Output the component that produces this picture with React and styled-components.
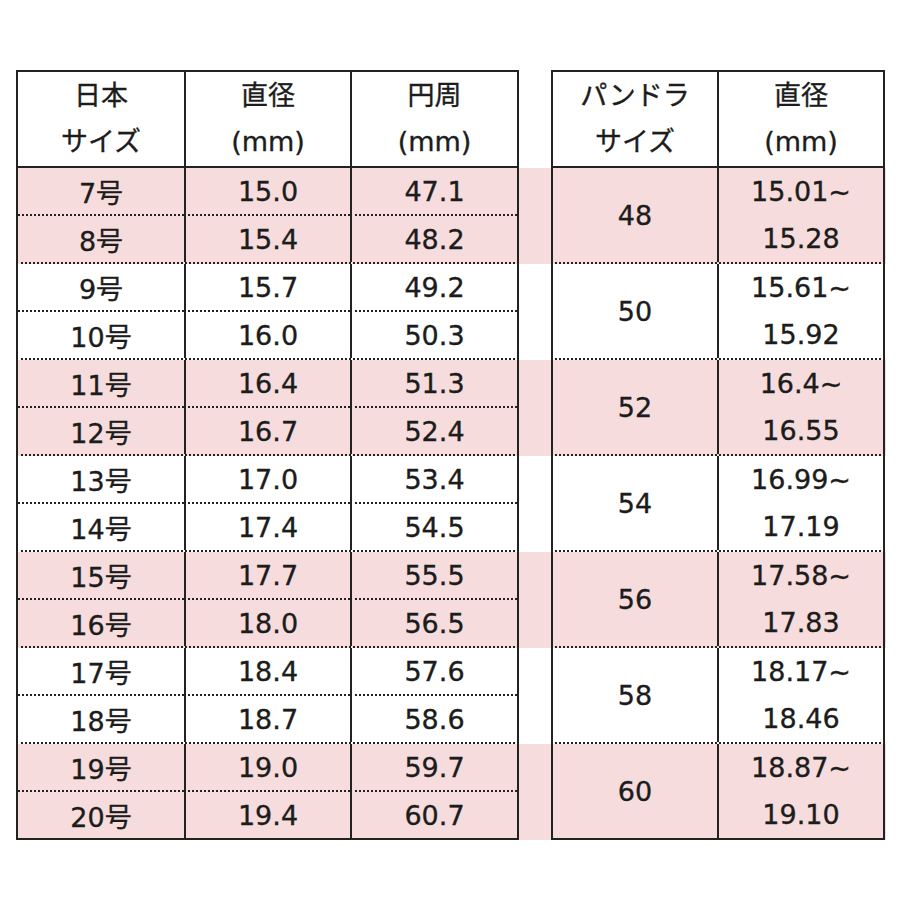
import React from "react";
import styled, { createGlobalStyle } from "styled-components";

const GlobalStyle = createGlobalStyle`
  body {
    margin: 0;
    background: #fff;
    font-family: "DejaVu Sans", "Noto Sans CJK JP", sans-serif;
    color: #1c1c1c;
  }
`;

const PINK = "#f6dcdc";
const LINE = "#222";

const Sheet = styled.div`
  margin: 70px 0 0 16px;
  width: 870px;
  display: flex;
  flex-direction: column;
`;

const Band = styled.div`
  display: flex;
  background: ${(p) => (p.$pink ? PINK : "transparent")};
`;

const Gap = styled.div`
  width: 32px;
  flex: none;
`;

const Part = styled.div`
  display: grid;
  grid-template-columns: ${(p) => p.$cols};
  border-left: 2px solid ${LINE};
  border-right: 2px solid ${LINE};
  border-top: ${(p) => (p.$head ? `2px solid ${LINE}` : "none")};
  border-bottom: ${(p) =>
    p.$head || p.$last ? `2px solid ${LINE}` : `2px dotted ${LINE}`};
  font-size: 27px;
  -webkit-text-stroke: 0.35px #1c1c1c;
`;

const HeadCell = styled.div`
  height: 94px;
  display: flex;
  flex-direction: column;
  align-items: center;
  justify-content: center;
  line-height: 46px;
  border-left: ${(p) => (p.$first ? "none" : `2px solid ${LINE}`)};
`;

const Cell = styled.div`
  height: 46px;
  display: flex;
  align-items: center;
  justify-content: center;
  border-left: ${(p) => (p.$first ? "none" : `2px solid ${LINE}`)};
  border-bottom: ${(p) => (p.$top ? `2px dotted ${LINE}` : "none")};
`;

const MergedCell = styled.div`
  height: 94px;
  display: flex;
  flex-direction: column;
  align-items: center;
  justify-content: center;
  line-height: 47px;
  border-left: ${(p) => (p.$first ? "none" : `2px solid ${LINE}`)};
`;

const LEFT_COLS = "166px 166px 167px";
const RIGHT_COLS = "164px 166px";

const japan = [
  ["7号", "15.0", "47.1"],
  ["8号", "15.4", "48.2"],
  ["9号", "15.7", "49.2"],
  ["10号", "16.0", "50.3"],
  ["11号", "16.4", "51.3"],
  ["12号", "16.7", "52.4"],
  ["13号", "17.0", "53.4"],
  ["14号", "17.4", "54.5"],
  ["15号", "17.7", "55.5"],
  ["16号", "18.0", "56.5"],
  ["17号", "18.4", "57.6"],
  ["18号", "18.7", "58.6"],
  ["19号", "19.0", "59.7"],
  ["20号", "19.4", "60.7"],
];

const pandora = [
  ["48", "15.01~", "15.28"],
  ["50", "15.61~", "15.92"],
  ["52", "16.4~", "16.55"],
  ["54", "16.99~", "17.19"],
  ["56", "17.58~", "17.83"],
  ["58", "18.17~", "18.46"],
  ["60", "18.87~", "19.10"],
];

export default function App() {
  return (
    <>
      <GlobalStyle />
      <Sheet>
        <Band>
          <Part $cols={LEFT_COLS} $head>
            <HeadCell $first>
              <span>日本</span>
              <span>サイズ</span>
            </HeadCell>
            <HeadCell>
              <span>直径</span>
              <span>(mm)</span>
            </HeadCell>
            <HeadCell>
              <span>円周</span>
              <span>(mm)</span>
            </HeadCell>
          </Part>
          <Gap />
          <Part $cols={RIGHT_COLS} $head>
            <HeadCell $first>
              <span>パンドラ</span>
              <span>サイズ</span>
            </HeadCell>
            <HeadCell>
              <span>直径</span>
              <span>(mm)</span>
            </HeadCell>
          </Part>
        </Band>
        {pandora.map(([size, from, to], i) => {
          const rows = japan.slice(i * 2, i * 2 + 2);
          const last = i === pandora.length - 1;
          return (
            <Band key={size} $pink={i % 2 === 0}>
              <Part $cols={LEFT_COLS} $last={last}>
                {rows.map((r, ri) =>
                  r.map((v, ci) => (
                    <Cell key={`${ri}-${ci}`} $first={ci === 0} $top={ri === 0}>
                      {v}
                    </Cell>
                  ))
                )}
              </Part>
              <Gap />
              <Part $cols={RIGHT_COLS} $last={last}>
                <MergedCell $first>{size}</MergedCell>
                <MergedCell>
                  <span>{from}</span>
                  <span>{to}</span>
                </MergedCell>
              </Part>
            </Band>
          );
        })}
      </Sheet>
    </>
  );
}
